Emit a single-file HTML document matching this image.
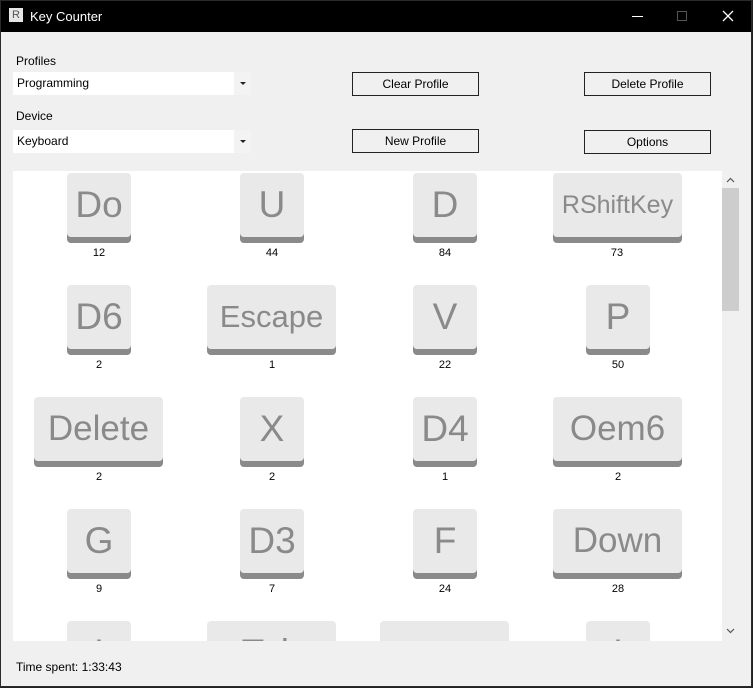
<!DOCTYPE html>
<html><head><meta charset="utf-8"><style>
*{margin:0;padding:0;box-sizing:border-box}
body{width:753px;height:688px;background:#222;position:relative;overflow:hidden;font-family:"Liberation Sans",sans-serif}
#win{position:absolute;left:0;top:0;width:752px;height:687px;background:#f0f0f0}
#frame{position:absolute;left:0;top:0;width:752px;height:687px;border:1px solid #2b2b2b;pointer-events:none}
#title{position:absolute;left:0;top:0;width:752px;height:32px;background:#000;color:#fff;font-size:13px}
.abs{position:absolute}
.lbl{font-size:12px;color:#000}
.combo{position:absolute;left:13px;width:238px;height:23px;background:#fff;font-size:12px;line-height:23px;padding-left:4px}
.combo .arr{position:absolute;right:0;top:0;width:17px;height:23px;background:#f3f3f3}
.combo .arr:after{content:"";position:absolute;left:6px;top:10px;border-left:3px solid transparent;border-right:3px solid transparent;border-top:3px solid #222}
.btn{position:absolute;width:127px;height:24px;border:1px solid #222;background:#f0f0f0;font-size:12px;text-align:center;line-height:22px}
#content{position:absolute;left:13px;top:171px;width:726px;height:470px;background:#fff;overflow:hidden}
.key{position:absolute;height:70px;background:#e9e9e9;border-radius:4px;box-shadow:inset 0 -6px 0 #8a8a8a;color:#8a8a8a;text-align:center;font-size:37px;line-height:64px}
.num{position:absolute;width:60px;text-align:center;font-size:11px;color:#000}
#sb{position:absolute;left:709px;top:0;width:17px;height:470px;background:#f0f0f0}
#thumb{position:absolute;left:0px;top:17px;width:17px;height:123px;background:#cdcdcd}
</style></head><body>
<div id="win">
<div id="title">
 <div class="abs" style="left:9px;top:8px;width:14px;height:14px;background:#e6e6e6;color:#555;font-size:11px;line-height:14px;text-align:center">R</div>
 <div class="abs" style="left:30px;top:9px">Key Counter</div>
 <div class="abs" style="left:632px;top:16px;width:11px;height:1px;background:#fff"></div>
 <div class="abs" style="left:677px;top:11px;width:10px;height:10px;border:1px solid #555"></div>
 <svg class="abs" style="left:722px;top:10px" width="12" height="12"><path d="M1 1L11 11M11 1L1 11" stroke="#fff" stroke-width="1.3"/></svg>
</div>
<div class="abs lbl" style="left:16px;top:54px">Profiles</div>
<div class="combo" style="top:72px">Programming<div class="arr"></div></div>
<div class="abs lbl" style="left:16px;top:109px">Device</div>
<div class="combo" style="top:130px">Keyboard<div class="arr"></div></div>
<div class="btn" style="left:352px;top:72px">Clear Profile</div>
<div class="btn" style="left:352px;top:129px">New Profile</div>
<div class="btn" style="left:584px;top:72px">Delete Profile</div>
<div class="btn" style="left:584px;top:130px">Options</div>

<div id="content">
<div class="key" style="left:54px;top:2px;width:64px">Do</div><div class="num" style="left:56px;top:76px">12</div>
<div class="key" style="left:227px;top:2px;width:64px">U</div><div class="num" style="left:229px;top:76px">44</div>
<div class="key" style="left:400px;top:2px;width:64px">D</div><div class="num" style="left:402px;top:76px">84</div>
<div class="key" style="left:540px;top:2px;width:129px;font-size:25px">RShiftKey</div><div class="num" style="left:574px;top:76px">73</div>
<div class="key" style="left:54px;top:114px;width:64px">D6</div><div class="num" style="left:56px;top:188px">2</div>
<div class="key" style="left:194px;top:114px;width:129px;font-size:31px">Escape</div><div class="num" style="left:229px;top:188px">1</div>
<div class="key" style="left:400px;top:114px;width:64px">V</div><div class="num" style="left:402px;top:188px">22</div>
<div class="key" style="left:573px;top:114px;width:64px">P</div><div class="num" style="left:575px;top:188px">50</div>
<div class="key" style="left:21px;top:226px;width:129px;font-size:35px">Delete</div><div class="num" style="left:56px;top:300px">2</div>
<div class="key" style="left:227px;top:226px;width:64px">X</div><div class="num" style="left:229px;top:300px">2</div>
<div class="key" style="left:400px;top:226px;width:64px">D4</div><div class="num" style="left:402px;top:300px">1</div>
<div class="key" style="left:540px;top:226px;width:129px;font-size:35px">Oem6</div><div class="num" style="left:575px;top:300px">2</div>
<div class="key" style="left:54px;top:338px;width:64px">G</div><div class="num" style="left:56px;top:412px">9</div>
<div class="key" style="left:227px;top:338px;width:64px">D3</div><div class="num" style="left:229px;top:412px">7</div>
<div class="key" style="left:400px;top:338px;width:64px">F</div><div class="num" style="left:402px;top:412px">24</div>
<div class="key" style="left:540px;top:338px;width:129px;font-size:35px">Down</div><div class="num" style="left:575px;top:412px">28</div>
<div class="key" style="left:54px;top:450px;width:64px">I</div>
<div class="key" style="left:194px;top:450px;width:129px">Tab</div>
<div class="key" style="left:367px;top:450px;width:129px"></div>
<div class="key" style="left:573px;top:450px;width:64px">I</div>
<div id="sb"><div id="thumb"></div>
<svg class="abs" style="left:4px;top:6px" width="9" height="6"><path d="M1 5L4.5 1.5L8 5" stroke="#555" fill="none" stroke-width="1.2"/></svg>
<svg class="abs" style="left:4px;top:457px" width="9" height="6"><path d="M1 1L4.5 4.5L8 1" stroke="#555" fill="none" stroke-width="1.2"/></svg>
</div>
</div>
<div class="abs lbl" style="left:16px;top:660px">Time spent: 1:33:43</div>
</div>
<div id="frame"></div>
</body></html>
